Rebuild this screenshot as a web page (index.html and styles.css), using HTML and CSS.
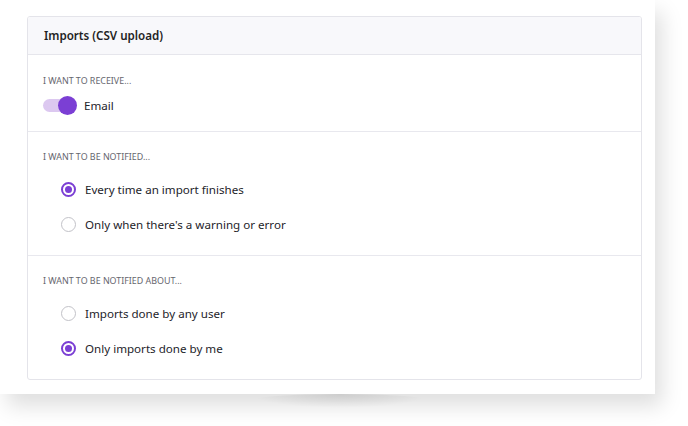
FILE: index.html
```html
<!DOCTYPE html>
<html>
<head>
<meta charset="utf-8">
<link rel="stylesheet" href="styles.css">
</head>
<body>
<div class="sheet">
  <div class="card">
    <div class="card-header">Imports (CSV upload)</div>
    <div class="section section-first">
      <div class="label">I WANT TO RECEIVE...</div>
      <div class="toggle-row">
        <span class="toggle"><span class="thumb"></span></span>
        <span class="opt-text">Email</span>
      </div>
    </div>
    <div class="section">
      <div class="label">I WANT TO BE NOTIFIED...</div>
      <div class="options">
        <div class="option"><span class="radio checked"></span><span class="opt-text">Every time an import finishes</span></div>
        <div class="option"><span class="radio"></span><span class="opt-text">Only when there's a warning or error</span></div>
      </div>
    </div>
    <div class="section">
      <div class="label">I WANT TO BE NOTIFIED ABOUT...</div>
      <div class="options">
        <div class="option"><span class="radio"></span><span class="opt-text">Imports done by any user</span></div>
        <div class="option"><span class="radio checked"></span><span class="opt-text">Only imports done by me</span></div>
      </div>
    </div>
  </div>
</div>
</body>
</html>
```
FILE: styles.css
```css
html, body {
  margin: 0;
  padding: 0;
  background: #ffffff;
  font-family: "Noto Sans", "Open Sans", sans-serif;
}
body {
  width: 688px;
  height: 426px;
  overflow: hidden;
}
.sheet {
  position: relative;
  width: 655px;
  height: 394px;
  box-sizing: border-box;
  padding: 16px 13px 0 27px;
  background: #ffffff;
  box-shadow: 7px 12px 20px rgba(0, 0, 0, 0.13);
}
.sheet::after {
  content: "";
  position: absolute;
  left: 250px;
  top: 394px;
  width: 180px;
  height: 14px;
  border-radius: 50%;
  background: radial-gradient(ellipse at center top, rgba(0,0,0,0.10), rgba(0,0,0,0) 70%);
}
.card {
  width: 615px;
  height: 364px;
  box-sizing: border-box;
  border: 1px solid #e4e4ea;
  border-radius: 3px;
  display: flex;
  flex-direction: column;
  overflow: hidden;
}
.card-header {
  height: 38px;
  flex: none;
  box-sizing: border-box;
  background: #f8f8fb;
  border-bottom: 1px solid #e6e6ec;
  padding: 0 16px;
  display: flex;
  align-items: center;
  font-size: 11.6px;
  font-weight: 600;
  color: #1f1f24;
}
.section {
  border-bottom: 1px solid #e8e8ee;
  padding: 18px 15px 0 15px;
  height: 124px;
  box-sizing: border-box;
}
.section:last-child {
  border-bottom: none;
  flex: 1;
}
.section-first {
  height: 77px;
  padding-top: 19px;
}
.label {
  font-size: 8.9px;
  color: #66666e;
  line-height: 14px;
}
.toggle-row {
  display: flex;
  align-items: center;
  gap: 7px;
  margin-top: 8px;
}
.toggle {
  position: relative;
  width: 34px;
  height: 19px;
  display: inline-block;
}
.toggle::before {
  content: "";
  position: absolute;
  left: 0;
  top: 3px;
  width: 30px;
  height: 13px;
  border-radius: 7px;
  background: #dcc8f0;
}
.thumb {
  position: absolute;
  right: 0;
  top: 0;
  width: 19px;
  height: 19px;
  border-radius: 50%;
  background: #7b3fd4;
}
.opt-text {
  font-size: 11.6px;
  color: #24242a;
}
.options {
  display: flex;
  flex-direction: column;
  gap: 15px;
  margin-top: 15px;
  padding-left: 18px;
}
.option {
  display: flex;
  align-items: center;
  gap: 9px;
  height: 20px;
}
.radio {
  width: 15px;
  height: 15px;
  box-sizing: border-box;
  border-radius: 50%;
  border: 1.6px solid #c2c2c8;
  background: #fff;
  display: flex;
  align-items: center;
  justify-content: center;
  flex: none;
}
.radio.checked {
  border: 2px solid #7b3fd4;
}
.radio.checked::after {
  content: "";
  width: 7px;
  height: 7px;
  border-radius: 50%;
  background: #7b3fd4;
}
```
